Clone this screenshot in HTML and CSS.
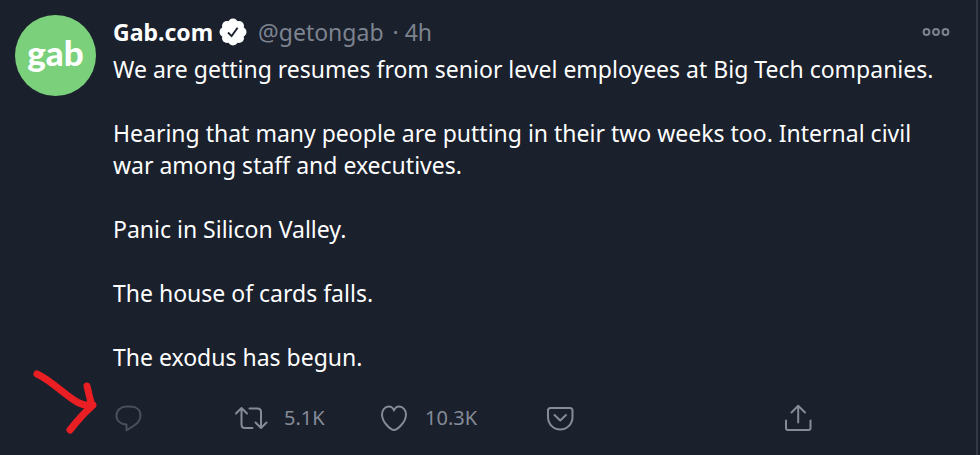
FILE: index.html
```
<!DOCTYPE html>
<html lang="en">
<head>
    <meta charset="utf-8">
    <title>Gab.com</title>
    <link rel="stylesheet" href="styles.css">
</head>
<body>
    <article class="tweet">
        <div class="avatar">gab</div>
        <div class="content">
            <header>
                <a href="#" class="name">Gab.com</a>
                <svg class="verified" viewBox="0 0 28 28" role="img" aria-label="Verified">
                    <g fill="#fff">
                        <circle cx="14" cy="14" r="10.5"/>
                        <circle cx="14" cy="5.5" r="5"/>
                        <circle cx="20" cy="8" r="5"/>
                        <circle cx="22.5" cy="14" r="5"/>
                        <circle cx="20" cy="20" r="5"/>
                        <circle cx="14" cy="22.5" r="5"/>
                        <circle cx="8" cy="20" r="5"/>
                        <circle cx="5.5" cy="14" r="5"/>
                        <circle cx="8" cy="8" r="5"/>
                    </g>
                    <path d="M9 14.5l3.6 3.6 6-8.4" fill="none" stroke="#1a202c" stroke-width="1.9"/>
                </svg>
                <a href="#" class="handle">@getongab</a>
                <span class="time">· 4h</span>
                <button class="more" aria-label="More">
                    <svg width="28" height="10" viewBox="0 0 28 10">
                        <circle cx="4.5" cy="5" r="2.9"/>
                        <circle cx="14" cy="5" r="2.9"/>
                        <circle cx="23.5" cy="5" r="2.9"/>
                    </svg>
                </button>
            </header>

            <div class="text">
                <p>We are getting resumes from senior level employees at Big Tech companies.</p>
                <p>Hearing that many people are putting in their two weeks too. Internal civil war among staff and executives.</p>
                <p>Panic in Silicon Valley.</p>
                <p>The house of cards falls.</p>
                <p>The exodus has begun.</p>
            </div>

            <footer>
                <button class="action disabled" aria-label="Reply" disabled>
                    <svg width="32" height="32" viewBox="0 0 32 32">
                        <path d="M13.5 22.5C7.5 22.5 3.5 18.5 3.5 13.5C3.5 8 8 4.500 13.5 4.500H17.5C23.5 4.500 27.5 8 27.5 13.5C27.5 20.5 20.5 24.5 13.5 28.2V22.5Z"/>
                    </svg>
                </button>
                <button class="action" aria-label="Retweet">
                    <svg width="36" height="32" viewBox="0 0 36 32">
                        <path d="M3 11.5L8.5 6L14 11.5M8.5 6.5V22.5Q8.5 26 12 26H19.5"/>
                        <path d="M16.5 6.5H24.5Q28 6.5 28 10V25.5M22.5 20.5L28 26L33.5 20.5"/>
                    </svg>
                    <span>5.1K</span>
                </button>
                <button class="action" aria-label="Like">
                    <svg width="32" height="32" viewBox="0 0 32 32">
                        <path d="M16 28C13 28 4 20.5 4 12.5C4 8 7 4.5 10.8 4.5C13.5 4.5 15.2 6.2 16 8.5C16.8 6.2 18.5 4.5 21.2 4.5C25 4.5 28 8 28 12.5C28 20.5 19 28 16 28Z"/>
                    </svg>
                    <span>10.3K</span>
                </button>
                <button class="action" aria-label="Save to Pocket">
                    <svg width="32" height="32" viewBox="0 0 32 32">
                        <path d="M6.5 6H26Q28.5 6 28.5 8.5V15C28.5 22 23 27.5 16.2 27.5S4 22 4 15V8.5Q4 6 6.5 6Z"/>
                        <path d="M10.5 13L16.2 18.5L22 13"/>
                    </svg>
                </button>
                <button class="action" aria-label="Share">
                    <svg width="32" height="32" viewBox="0 0 32 32">
                        <path d="M16.2 20.5V4M9.5 10.5L16.2 3.8L23 10.5"/>
                        <path d="M4 18.5V26Q4 28 6 28H26.5Q28.5 28 28.5 26V18.5"/>
                    </svg>
                </button>
            </footer>
        </div>
        <!-- arrow drawn over the tweet, pointing at the reply button -->
        <svg class="arrow" width="68" height="70" viewBox="0 0 68 70">
            <path d="M6 7C20 13 37 31 48 36Q54 39 62 38M56 19Q58 28 61 39C53 46 46 54 39 63"/>
        </svg>
    </article>
</body>
</html>
```

FILE: styles.css
```
body {
    margin: 0;
    background-color: #1a202c;
    color: #fff;
    font-family: "Segoe UI", "Noto Sans", "Open Sans", sans-serif;
    font-size: 23px;
    line-height: 32px;
}
a {
    color: inherit;
    text-decoration: none;
}
button {
    padding: 0;
    border: none;
    background: none;
    color: inherit;
    font: inherit;
    cursor: pointer;
}
svg {
    flex-shrink: 0;
}
.tweet {
    position: relative;
    display: flex;
    gap: 17px;
    min-height: 100vh;
    box-sizing: border-box;
    margin-right: 2px;
    padding: 15px 26px 0 15px;
    border-right: 2px solid #343a47;
}
.avatar {
    display: flex;
    flex-shrink: 0;
    justify-content: center;
    width: 81px;
    height: 81px;
    border-radius: 50%;
    background-color: #7bd17b;
    font-family: Lato, sans-serif;
    font-size: 35px;
    font-weight: 900;
    line-height: 74px;
}
.content {
    flex: 1;
    min-width: 0;
}
header {
    display: flex;
    align-items: center;
    height: 34px;
    margin-bottom: 4px;
    color: #7d838f;
}
.name {
    color: #fff;
    font-weight: bold;
}
.verified {
    width: 28px;
    height: 28px;
    margin: 0 11px 0 6px;
}
.time {
    margin-left: 9px;
}
.more {
    display: flex;
    margin-left: auto;
}
.more svg {
    fill: none;
    stroke: #7d838f;
    stroke-width: 2;
}
.text p {
    margin: 0 0 32px;
}
footer {
    display: grid;
    grid-template-columns: 120fr 145fr 166fr 238fr 168fr;
    margin-top: -3px;
    color: #858b97;
    font-size: 20px;
}
.action {
    display: flex;
    align-items: center;
    gap: 15px;
}
.action svg {
    fill: none;
    stroke: currentColor;
    stroke-width: 2;
    stroke-linecap: round;
    stroke-linejoin: round;
}
.disabled {
    color: #4a505c;
}
.arrow {
    position: absolute;
    left: 31px;
    top: 367px;
    fill: none;
    stroke: #ea1f23;
    stroke-width: 7;
    stroke-linecap: round;
    stroke-linejoin: round;
}
```
